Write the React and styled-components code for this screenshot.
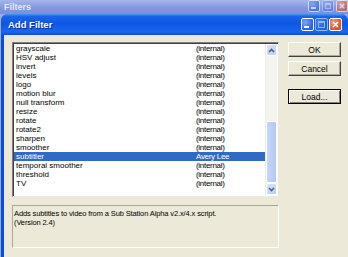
import React from 'react';
import styled, { createGlobalStyle } from 'styled-components';

const GlobalStyle = createGlobalStyle`
  html, body {
    margin: 0;
    padding: 0;
    background: #ece9d8;
  }
  body {
    font-family: "Liberation Sans", Arial, sans-serif;
  }
`;

const filters = [
    ['grayscale', '(internal)'],
    ['HSV adjust', '(internal)'],
    ['invert', '(internal)'],
    ['levels', '(internal)'],
    ['logo', '(internal)'],
    ['motion blur', '(internal)'],
    ['null transform', '(internal)'],
    ['resize', '(internal)'],
    ['rotate', '(internal)'],
    ['rotate2', '(internal)'],
    ['sharpen', '(internal)'],
    ['smoother', '(internal)'],
    ['subtitler', 'Avery Lee'],
    ['temporal smoother', '(internal)'],
    ['threshold', '(internal)'],
    ['TV', '(internal)'],
];

const Screen = styled.div`
  width: 348px;
  height: 257px;
  overflow: hidden;
  display: flex;
  flex-direction: column;
  background: #9aaae0;
`;

const ParentBar = styled.div`
  height: 14px;
  flex-shrink: 0;
  display: flex;
  align-items: center;
  justify-content: space-between;
  padding-left: 4px;
  background: linear-gradient(#a5b6ee, #8196dc 60%, #7a90d8);
  color: #e4e9fa;
  font-weight: bold;
  font-size: 9px;
  overflow: hidden;
`;

const Window = styled.div`
  flex: 1;
  margin-left: 1px;
  display: flex;
  flex-direction: column;
  background: #0a4fdb;
  border-radius: 7px 7px 0 0;
  overflow: hidden;
`;

const TitleBar = styled.div`
  height: 21px;
  flex-shrink: 0;
  display: flex;
  align-items: center;
  justify-content: space-between;
  padding: 0 6px 0 7px;
  background: linear-gradient(#4a94f5 0%, #1a64e8 12%, #0c58e4 45%, #1a66ee 85%, #0c4cd0 100%);
  color: #fff;
  font-weight: bold;
  font-size: 9.5px;
  text-shadow: 1px 1px 0 #0a2c8c;
`;

const Caption = styled.div`
  display: flex;
  gap: ${p => p.gap}px;
  margin-top: ${p => p.offset || 0}px;
  opacity: ${p => p.faded ? 0.6 : 1};
`;

const CapButton = styled.div`
  width: ${p => p.size}px;
  height: ${p => p.size}px;
  box-sizing: border-box;
  border: 1px solid #fff;
  border-radius: 2px;
  position: relative;
  background: ${p => p.kind === 'close'
        ? 'radial-gradient(circle at 30% 30%, #f29a7a, #e0522a 70%)'
        : 'radial-gradient(circle at 30% 30%, #7aa6f8, #2a62e6 70%)'};
  opacity: ${p => p.disabled ? 0.55 : 1};
`;

const MinGlyph = styled.span`
  position: absolute;
  left: 2px;
  bottom: 2px;
  width: 5px;
  height: 2px;
  background: #fff;
`;

const MaxGlyph = styled.span`
  position: absolute;
  left: 2px;
  top: 2px;
  right: 2px;
  bottom: 2px;
  border: 1px solid #fff;
  border-top-width: 2px;
`;

const Body = styled.div`
  flex: 1;
  margin-left: 3px;
  display: flex;
  gap: 9px;
  padding: 7px 6px 0 8px;
  background: #ece9d8;
`;

const LeftColumn = styled.div`
  width: 267px;
  display: flex;
  flex-direction: column;
  gap: 8px;
`;

const ListBox = styled.div`
  height: 155px;
  box-sizing: border-box;
  display: flex;
  background: #fff;
  border: 1px solid;
  border-color: #7f7f7f #e8e8e8 #e8e8e8 #7f7f7f;
  box-shadow: inset 1px 1px 0 #404040;
  padding: 1px;
`;

const Rows = styled.div`
  flex: 1;
  display: flex;
  flex-direction: column;
`;

const Row = styled.div`
  height: 9px;
  line-height: 9px;
  font-size: 8px;
  display: grid;
  grid-template-columns: 180px 1fr;
  padding-left: 2px;
  white-space: nowrap;
  color: ${p => p.selected ? '#fff' : '#000'};
  background: ${p => p.selected ? '#316ac5' : 'transparent'};
`;

const Author = styled.span`
  letter-spacing: -0.3px;
`;

const ScrollBar = styled.div`
  width: 11px;
  display: flex;
  flex-direction: column;
  background: #f4f3ee;
  border-left: 1px solid #eeede5;
`;

const Arrow = styled.div`
  height: 12px;
  flex-shrink: 0;
  box-sizing: border-box;
  border: 1px solid #fff;
  border-radius: 2px;
  background: linear-gradient(135deg, #dbe5fd, #b8ccf8);
  display: flex;
  align-items: center;
  justify-content: center;
`;

const Track = styled.div`
  flex: 1;
  display: flex;
  flex-direction: column;
  justify-content: flex-end;
`;

const Thumb = styled.div`
  height: 62px;
  box-sizing: border-box;
  border: 1px solid #fff;
  border-radius: 2px;
  background: linear-gradient(90deg, #c6d6fb, #b4c8f6);
`;

const Description = styled.div`
  height: 43px;
  box-sizing: border-box;
  border: 1px solid;
  border-color: #aca899 #fff #fff #aca899;
  padding: 3px 1px;
  font-size: 7.5px;
  letter-spacing: -0.12px;
  line-height: 9px;
  color: #000;
`;

const ButtonColumn = styled.div`
  width: 53px;
  display: flex;
  flex-direction: column;
`;

const Button = styled.div`
  height: 15px;
  margin-top: ${p => p.gap}px;
  box-sizing: border-box;
  display: flex;
  align-items: center;
  justify-content: center;
  font-size: 8.5px;
  color: #000;
  background: #ece9d8;
  border: 1px solid;
  border-color: ${p => p.isDefault ? '#000' : '#fff #404040 #404040 #fff'};
  box-shadow: ${p => p.isDefault
        ? 'inset 1px 1px 0 #fff, inset -1px -1px 0 #808080'
        : 'inset -1px -1px 0 #aca899'};
`;

const Chevron = ({ up }) => (
    <svg width="7" height="5" viewBox="0 0 7 5">
        <path
            d={up ? 'M1 4 L3.5 1.5 L6 4' : 'M1 1 L3.5 3.5 L6 1'}
            fill="none"
            stroke="#4d6185"
            strokeWidth="1.6"
        />
    </svg>
);

const CaptionButtons = ({ size, gap, offset, faded }) => (
    <Caption gap={gap} offset={offset} faded={faded}>
        <CapButton size={size}><MinGlyph /></CapButton>
        <CapButton size={size} disabled><MaxGlyph /></CapButton>
        <CapButton size={size} kind="close">
            <svg width={size - 2} height={size - 2} viewBox="0 0 11 11" style={{ display: 'block' }}>
                <path d="M3 3 L8 8 M8 3 L3 8" stroke="#fff" strokeWidth="1.6" />
            </svg>
        </CapButton>
    </Caption>
);

export default function App() {
    return (
        <Screen>
            <GlobalStyle />
            <ParentBar>
                <span>Filters</span>
                <CaptionButtons size={12} gap={2} offset={-2} faded />
            </ParentBar>
            <Window>
                <TitleBar>
                    <span>Add Filter</span>
                    <CaptionButtons size={13} gap={1} />
                </TitleBar>
                <Body>
                    <LeftColumn>
                        <ListBox>
                            <Rows>
                                {filters.map(([name, author]) => (
                                    <Row key={name} selected={name === 'subtitler'}>
                                        <span>{name}</span>
                                        <Author>{author}</Author>
                                    </Row>
                                ))}
                            </Rows>
                            <ScrollBar>
                                <Arrow><Chevron up /></Arrow>
                                <Track><Thumb /></Track>
                                <Arrow><Chevron /></Arrow>
                            </ScrollBar>
                        </ListBox>
                        <Description>
                            Adds subtitles to video from a Sub Station Alpha v2.x/4.x script.
                            <br />
                            (Version 2.4)
                        </Description>
                    </LeftColumn>
                    <ButtonColumn>
                        <Button gap={0}>OK</Button>
                        <Button gap={4}>Cancel</Button>
                        <Button gap={13} isDefault>Load...</Button>
                    </ButtonColumn>
                </Body>
            </Window>
        </Screen>
    );
}
